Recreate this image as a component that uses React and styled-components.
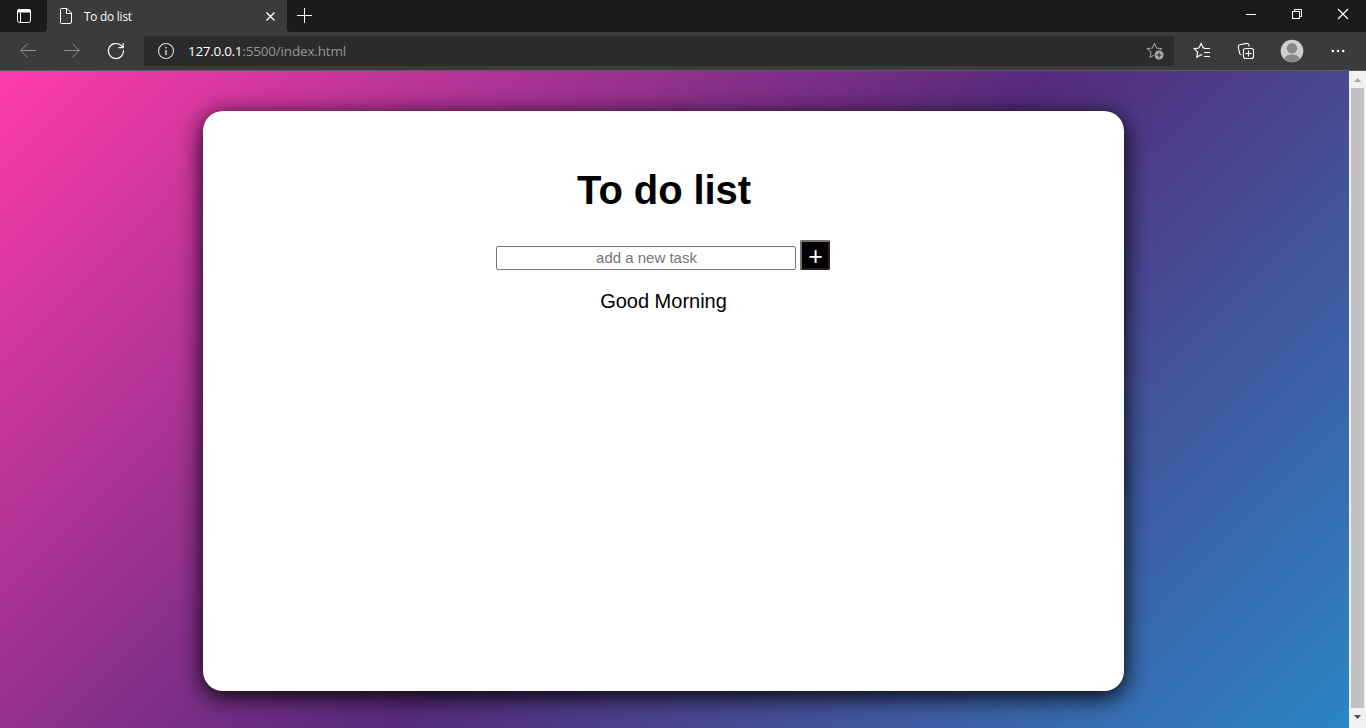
import React from "react";
import styled, { createGlobalStyle } from "styled-components";

const Global = createGlobalStyle`
  * { box-sizing: border-box; }
  body { margin: 0; overflow: hidden; }
`;

const Window = styled.div`
  display: flex;
  flex-direction: column;
  width: 1366px;
  height: 728px;
  overflow: hidden;
  font-family: "Open Sans", "Noto Sans", sans-serif;
`;

const TitleBar = styled.header`
  display: flex;
  flex: 0 0 32px;
  background: #3b3b3b;
`;

const TabActions = styled.div`
  display: flex;
  width: 47px;
  background: #1b1b1b;
  border-bottom-right-radius: 4px;
  padding: 8px 0 0 16px;
`;

const Tab = styled.div`
  display: flex;
  align-items: center;
  width: 240px;
  padding: 0 9px 0 11px;
  background: #3b3b3b;
`;

const TabTitle = styled.span`
  flex: 1;
  margin: 0 0 1px 9px;
  color: #fff;
  font-size: 11.8px;
  line-height: 16px;
  letter-spacing: -0.2px;
  white-space: nowrap;
`;

const TitleSpace = styled.div`
  display: flex;
  flex: 1;
  justify-content: space-between;
  background: #1b1b1b;
  border-bottom-left-radius: 4px;
  padding-left: 10px;
`;

const WindowControls = styled.div`
  display: flex;
`;

const Control = styled.div`
  display: flex;
  justify-content: center;
  width: 46px;
  padding-top: 8px;
`;

const Toolbar = styled.nav`
  display: flex;
  align-items: center;
  flex: 0 0 39px;
  padding: 0 6px 0 6px;
  background: #3b3b3b;
  border-bottom: 1px solid #5c5c5c;
`;

const ToolButton = styled.div`
  display: flex;
  align-items: center;
  justify-content: center;
  width: ${(p) => p.$width || 44}px;
  height: 30px;
`;

const AddressBar = styled.div`
  display: flex;
  align-items: center;
  width: 1030px;
  height: 30px;
  margin: 0 6px;
  padding: 0 10px 0 13px;
  border-radius: 3px;
  background: #2b2b2b;
`;

const Address = styled.span`
  flex: 1;
  margin-left: 13px;
  font-size: 13.5px;
  line-height: 20px;
  letter-spacing: -0.17px;
  color: #959595;
`;

const Host = styled.span`
  color: #fff;
  letter-spacing: -0.3px;
`;

const Viewport = styled.div`
  display: flex;
  flex: 1;
  min-height: 0;
`;

const Page = styled.main`
  flex: 1;
  padding: 40px 225px 37px 203px;
  background: linear-gradient(135deg, #ff3cac 0%, #562b7c 52.3%, #2b86c5 100%);
  font-family: Arial, "Liberation Sans", sans-serif;
`;

const Card = styled.section`
  display: flex;
  flex-direction: column;
  align-items: center;
  height: 580px;
  border-radius: 20px;
  background: #fff;
  box-shadow: 0 5px 25px #000;
`;

const Heading = styled.h1`
  margin: 56px 0 0 1px;
  font-size: 40px;
  line-height: 46px;
  letter-spacing: -0.1px;
  color: #000;
`;

const TaskForm = styled.div`
  display: flex;
  align-items: flex-end;
  gap: 4px;
  margin: 27px 1px 0 0;
`;

const TaskInput = styled.input`
  width: 300px;
  height: 24px;
  padding: 0 2px 2px 3px;
  border: 1px solid #767676;
  border-radius: 2px;
  background: #fff;
  font: 15px Arial, "Liberation Sans", sans-serif;
  text-align: center;
  outline: none;
  &::placeholder { color: #757575; }
`;

const AddButton = styled.button`
  display: flex;
  align-items: center;
  justify-content: center;
  width: 30px;
  height: 30px;
  padding: 2px 0 0 1px;
  border: 2px solid;
  border-color: #767676 #212121 #212121 #767676;
  border-radius: 2px;
  background: #000;
  color: #fff;
  font: 25px/26px Arial, "Liberation Sans", sans-serif;
`;

const Task = styled.p`
  margin: 20px 0 0;
  font-size: 20px;
  line-height: 23px;
  color: #000;
`;

const Scrollbar = styled.div`
  display: flex;
  flex-direction: column;
  align-items: center;
  width: 17px;
  background: #f1f1f1;
`;

const ScrollArrow = styled.div`
  display: flex;
  align-items: center;
  justify-content: center;
  width: 17px;
  height: 17px;
`;

const Thumb = styled.div`
  width: 13px;
  height: 620px;
  background: #c1c1c1;
`;

const Line = ({ w = 16, h = 16, color = "#fff", sw = 1, children }) => (
  <svg width={w} height={h} viewBox={`0 0 ${w} ${h}`} fill="none" stroke={color} strokeWidth={sw}>
    {children}
  </svg>
);

const star = "M8.5 1.5 L10.6 6 L15.5 6.7 L12 10.2 L12.8 15.2 L8.5 12.8 L4.1 15.2 L4.9 10.2 L1.3 6.7 L6.3 6 Z";

export default function App() {
  return (
    <>
      <Global />
      <Window>
        <TitleBar>
          <TabActions>
            <Line>
              <rect x="1.5" y="1.5" width="13" height="13" rx="2" />
              <path d="M1.5 4V3Q1.5 1.5 3 1.5H13Q14.5 1.5 14.5 3V4Z" fill="#fff" />
              <path d="M4.5 5V14" />
            </Line>
          </TabActions>
          <Tab>
            <Line w={17}>
              <path d="M3.5 .5H9L13.5 5V14Q13.5 15.5 12 15.5H3.5Q2.5 15.5 2.5 14.5V1.5Q2.5 .5 3.5 .5ZM8.5 .5V5.5H13.5" />
            </Line>
            <TabTitle>To do list</TabTitle>
            <Line w={14} sw={1.3}><path d="M2.5 4.5L10.5 12.5M10.5 4.5L2.5 12.5" /></Line>
          </Tab>
          <TitleSpace>
            <Line h={32}><path d="M7.5 8V23M0 15.5H15" /></Line>
            <WindowControls>
              <Control><Line w={14}><path d="M2 6.5H12" /></Line></Control>
              <Control>
                <Line w={14}><rect x="2.5" y="3.5" width="7" height="7" /><path d="M4.5 3V1.5H11.5V8.5H10" /></Line>
              </Control>
              <Control><Line w={14} sw={1.2}><path d="M2 1L12 11M12 1L2 11" /></Line></Control>
            </WindowControls>
          </TitleSpace>
        </TitleBar>
        <Toolbar>
          <ToolButton>
            <Line color="#929292"><path d="M16 7.5H.7M7.7 .5L.7 7.5L7.7 14.5" /></Line>
          </ToolButton>
          <ToolButton>
            <Line color="#929292"><path d="M0 7.5H15.3M8.3 .5L15.3 7.5L8.3 14.5" /></Line>
          </ToolButton>
          <ToolButton>
            <Line w={18} h={18} sw={1.2}><path d="M16.4 8.2A7.5 7.5 0 1 1 13.8 3.3L16 5.2M16.2 1V5.6H11.5" /></Line>
          </ToolButton>
          <AddressBar>
            <Line w={18} h={18} color="#ddd" sw={1.1}>
              <circle cx="9" cy="9" r="7.5" /><path d="M9 8V13M9 5V6.5" strokeWidth="1.4" />
            </Line>
            <Address><Host>127.0.0.1</Host>:5500/index.html</Address>
            <Line w={18} h={18} color="#999" sw={1.1}>
              <path d={star} />
              <circle cx="13" cy="13" r="5.3" fill="#2b2b2b" stroke="none" />
              <circle cx="13" cy="13" r="4.5" fill="#aaa" stroke="none" />
              <path d="M13 10.5V15.5M10.5 13H15.5" stroke="#2b2b2b" />
            </Line>
          </AddressBar>
          <ToolButton>
            <Line w={18} h={18} sw={1.2}>
              <path d="M11.8 6.2L10.3 6L8.1 1.6L5.9 6L1.2 6.7L4.6 10.2L3.8 15.2L8.1 12.8L9 13.3" />
              <path d="M11 6.5H17M11 10.5H17M11 14.5H17" strokeWidth="1" />
            </Line>
          </ToolButton>
          <ToolButton>
            <Line w={18} h={18} sw={1.1}>
              <rect x="6.5" y="6.5" width="10" height="10" rx="2" />
              <path d="M11.5 8.5V14.5M8.5 11.5H14.5M4.5 12.8Q2.8 12.5 2.5 11L1.3 5Q1 3.2 2.7 2.8L9.5 1.4Q11.2 1.1 11.7 2.8L12 4.5" />
            </Line>
          </ToolButton>
          <ToolButton $width={48}>
            <svg width="24" height="24" viewBox="0 0 24 24">
              <clipPath id="avatar"><circle cx="12" cy="12" r="11.3" /></clipPath>
              <g clipPath="url(#avatar)">
                <rect width="24" height="24" fill="#d2d0ce" />
                <circle cx="12" cy="9.2" r="5.2" fill="#8a8886" />
                <ellipse cx="12" cy="21" rx="8" ry="5.8" fill="#8a8886" />
              </g>
            </svg>
          </ToolButton>
          <ToolButton>
            <svg width="16" height="16" viewBox="0 0 16 16" fill="#fff">
              <circle cx="2.8" cy="8" r="1.25" /><circle cx="8" cy="8" r="1.25" /><circle cx="13.2" cy="8" r="1.25" />
            </svg>
          </ToolButton>
        </Toolbar>
        <Viewport>
          <Page>
            <Card>
              <Heading>To do list</Heading>
              <TaskForm>
                <TaskInput placeholder="add a new task" />
                <AddButton>+</AddButton>
              </TaskForm>
              <Task>Good Morning</Task>
            </Card>
          </Page>
          <Scrollbar>
            <ScrollArrow><svg width="7" height="4" viewBox="0 0 7 4" fill="#a3a3a3"><path d="M0 4L3.5 0L7 4Z" /></svg></ScrollArrow>
            <Thumb />
            <ScrollArrow><svg width="7" height="4" viewBox="0 0 7 4" fill="#505050"><path d="M0 0L3.5 4L7 0Z" /></svg></ScrollArrow>
          </Scrollbar>
        </Viewport>
      </Window>
    </>
  );
}
